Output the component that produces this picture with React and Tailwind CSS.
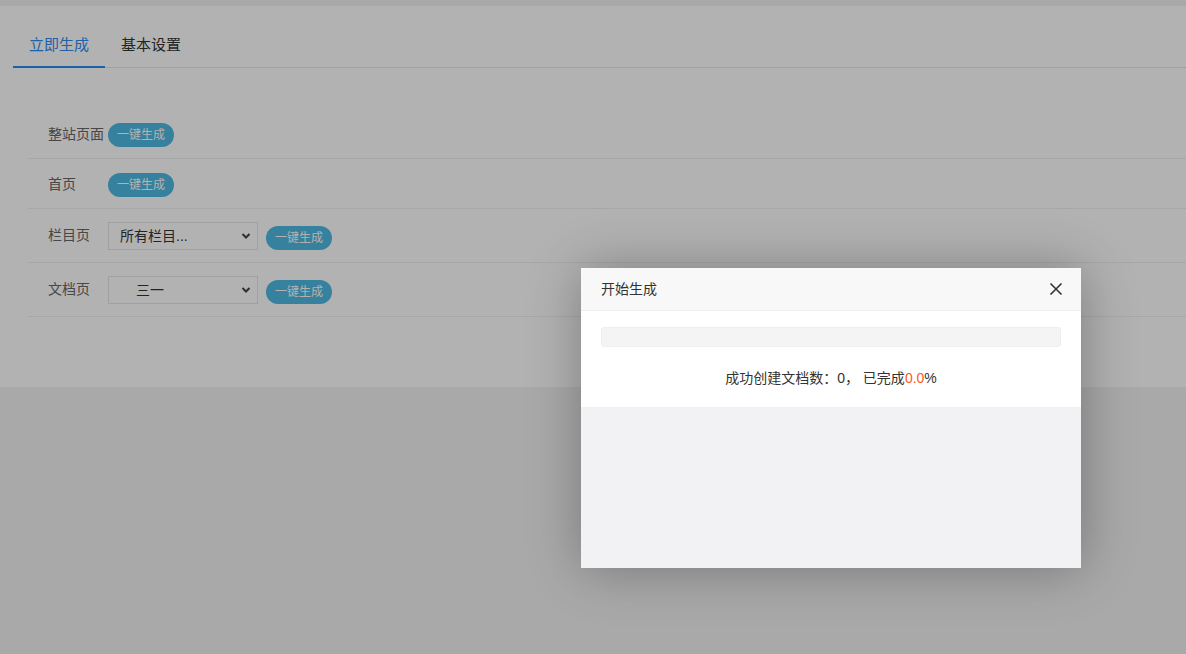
import React from 'react';

const font = { fontFamily: '"Liberation Sans", "Noto Sans CJK SC", sans-serif' };

const GenButton = ({ shift = false }) => (
  <button
    className={`h-6 px-[9px] rounded-full bg-[#4db9e2] text-white text-xs leading-6 whitespace-nowrap ${
      shift ? 'translate-y-[2px]' : ''
    }`}
  >
    一键生成
  </button>
);

const Chevron = () => (
  <svg className="absolute right-[6px] top-1/2 -translate-y-1/2" width="10" height="8" viewBox="0 0 10 8">
    <path d="M1.5 2 L5 5.5 L8.5 2" fill="none" stroke="#444" strokeWidth="2" />
  </svg>
);

const Select = ({ children, indent = false }) => (
  <div className="relative w-[150px] h-[28px] border border-[#e6e6e6] bg-white">
    <div className={`h-full flex items-center text-sm text-[#333] ${indent ? 'pl-[27px]' : 'pl-[11px]'}`}>
      {children}
    </div>
    <Chevron />
  </div>
);

const Row = ({ label, tall = false, children }) => (
  <div
    className={`flex items-center border-b border-[#f0f0f0] ${
      tall ? 'pt-[13px] pb-[12px]' : 'pt-[14px] pb-[11px]'
    }`}
  >
    <div className="w-20 pl-5 text-sm text-[#666] -translate-y-[1px] whitespace-nowrap">{label}</div>
    <div className="flex items-center gap-2">{children}</div>
  </div>
);

export default function App() {
  return (
    <div className="relative h-[654px] w-full overflow-hidden bg-[#f2f2f2] pt-[6px]" style={font}>
      {/* page */}
      <div className="bg-white h-[381px] pl-[13px] pt-[19px]">
        <div className="flex border-b border-[#e6e6e6] h-[43px]">
          <div className="relative px-4 h-[42px] leading-10 text-[15px] text-[#2d8cf0]">
            立即生成
            <div className="absolute left-0 right-0 -bottom-[1px] h-[2px] bg-[#2d8cf0]" />
          </div>
          <div className="px-4 h-[42px] leading-10 text-[15px] text-[#333]">基本设置</div>
        </div>

        <div className="ml-[15px] mt-[41px]">
          <Row label="整站页面">
            <GenButton />
          </Row>
          <Row label="首页">
            <GenButton />
          </Row>
          <Row label="栏目页" tall>
            <Select>所有栏目...</Select>
            <GenButton shift />
          </Row>
          <Row label="文档页" tall>
            <Select indent>三一</Select>
            <GenButton shift />
          </Row>
        </div>
      </div>

      {/* shade */}
      <div className="absolute inset-0 bg-black/30" />

      {/* layer */}
      <div className="absolute left-[581px] top-[268px] w-[500px] h-[300px] flex flex-col bg-white shadow-[1px_1px_50px_rgba(0,0,0,0.3)]">
        <div className="h-[43px] flex items-center justify-between pl-5 pr-[18px] bg-[#f8f8f8] border-b border-[#eeeeee]">
          <span className="text-sm text-[#333]">开始生成</span>
          <svg width="14" height="14" viewBox="0 0 14 14">
            <path d="M1.5 1.5 L12.5 12.5 M12.5 1.5 L1.5 12.5" stroke="#333" strokeWidth="1.6" fill="none" />
          </svg>
        </div>
        <div className="px-5 pt-4 pb-[19px] bg-white">
          <div className="h-5 rounded-[3px] bg-[#f4f4f4] border border-[#eeeeee]" />
          <div className="mt-[21px] h-5 leading-5 text-center text-sm text-[#333]">
            成功创建文档数：0， 已完成<span className="text-[#ff5722]">0.0</span>%
          </div>
        </div>
        <div className="flex-1 bg-[#f2f2f4]" />
      </div>
    </div>
  );
}
